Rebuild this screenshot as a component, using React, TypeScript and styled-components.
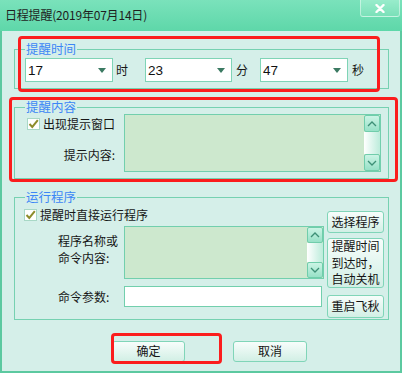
import React from "react";
import styled, { createGlobalStyle } from "styled-components";

const GlobalStyle = createGlobalStyle`
  html, body { margin: 0; padding: 0; background: #ffffff; }
  body {
    font-family: "Noto Sans CJK SC", "Noto Sans", sans-serif;
    font-size: 12px;
    color: #161616;
  }
  * { box-sizing: border-box; }
`;

const Window = styled.div`
  position: relative;
  width: 402px;
  height: 373px;
  display: flex;
  flex-direction: column;
  background: #d5efe9;
  overflow: hidden;
`;

const TitleBar = styled.div`
  height: 31px;
  flex: none;
  display: flex;
  justify-content: space-between;
  align-items: flex-start;
  background: linear-gradient(#7ae2bb, #5ed7a9);
`;

const Title = styled.div`
  padding: 6px 0 0 5px;
  line-height: 17px;
  font-size: 12px;
  letter-spacing: -0.2px;
  color: #1e1e1e;
`;

const CloseButton = styled.div`
  width: 40px;
  height: 17px;
  margin-right: 2px;
  display: flex;
  align-items: center;
  justify-content: center;
  background: linear-gradient(#98eccb, #7be0b9);
  border: 1px solid rgba(255, 255, 255, 0.45);
  border-top: none;
  border-radius: 0 0 3px 3px;
`;

const Body = styled.div`
  flex: 1;
  border: 2px solid #5cc9a0;
  border-top: none;
  padding: 11px 11px 0 12px;
  display: flex;
  flex-direction: column;
`;

const Group = styled.fieldset<{ $pad: string; $mt: number }>`
  margin: ${(p) => p.$mt}px 0 0 0;
  padding: ${(p) => p.$pad};
  border: 1px solid #76d1b1;
  min-width: 0;
`;

const Legend = styled.legend`
  padding: 0 1px;
  color: #3c86f6;
  font-size: 12.5px;
  line-height: 14px;
`;

const TimeRow = styled.div`
  display: flex;
  align-items: center;
`;

const Combo = styled.div<{ $w: number }>`
  width: ${(p) => p.$w}px;
  height: 24px;
  border: 1px solid #7fd4b6;
  background: #ffffff;
  display: flex;
  align-items: center;
  justify-content: space-between;
  padding: 0 6px 0 2px;
  font-family: "Liberation Sans", Arial, sans-serif;
  font-size: 13.5px;
  color: #111;
`;

const Unit = styled.span<{ $after: number }>`
  margin: 0 ${(p) => p.$after}px 0 ${(p) => (p.$after > 14 ? 3 : 4)}px;
  line-height: 16px;
`;

const ContentGrid = styled.div`
  display: grid;
  grid-template-columns: 99px 257px;
`;

const LeftColumn = styled.div`
  display: flex;
  flex-direction: column;
`;

const CheckRow = styled.label<{ $ml: number; $mt: number }>`
  display: flex;
  align-items: center;
  gap: 3px;
  height: 13px;
  margin: ${(p) => p.$mt}px 0 0 ${(p) => p.$ml}px;
  line-height: 17px;
  white-space: nowrap;
`;

const CheckBox = styled.span`
  width: 13px;
  height: 12px;
  flex: none;
  border: 1px solid #a8d8c6;
  background: #ffffff;
  display: inline-flex;
  align-items: center;
  justify-content: center;
`;

const RightLabel = styled.div`
  margin: auto 0 9px 0;
  padding-right: 9px;
  text-align: right;
  line-height: 17px;
`;

const TextArea = styled.div<{ $w: number; $h: number }>`
  width: ${(p) => p.$w}px;
  height: ${(p) => p.$h}px;
  border: 1px solid #72cfad;
  background: #cde8ce;
  display: flex;
  justify-content: flex-end;
`;

const ScrollBar = styled.div`
  width: 16px;
  display: flex;
  flex-direction: column;
`;

const ScrollButton = styled.div<{ $h: number }>`
  height: ${(p) => p.$h}px;
  flex: none;
  border: 1px solid #70cdab;
  border-radius: 2px;
  background: linear-gradient(#cbf4e5, #97e1c7);
  display: flex;
  align-items: center;
  justify-content: center;
`;

const ScrollTrack = styled.div`
  flex: 1;
  background: linear-gradient(to right, #ffffff, #bcecdb);
`;

const RunContent = styled.div`
  display: flex;
  gap: 3px;
`;

const RunMain = styled.div`
  width: 299px;
  display: flex;
  flex-direction: column;
`;

const FormRow = styled.div<{ $mt: number; $align: string }>`
  display: grid;
  grid-template-columns: 99px auto;
  align-items: ${(p) => p.$align};
  margin-top: ${(p) => p.$mt}px;
`;

const FieldLabel = styled.div<{ $mt: number }>`
  padding-left: 33px;
  margin-top: ${(p) => p.$mt}px;
  line-height: 17px;
`;

const TextInput = styled.div`
  width: 198px;
  height: 21px;
  border: 1px solid #72cfad;
  background: #ffffff;
`;

const SideButtons = styled.div`
  width: 57px;
  margin-top: 7px;
  display: flex;
  flex-direction: column;
`;

const Button = styled.div<{ $h: number; $mt?: number; $w?: number }>`
  width: ${(p) => (p.$w ? `${p.$w}px` : "100%")};
  height: ${(p) => p.$h}px;
  margin-top: ${(p) => p.$mt ?? 0}px;
  border: 1px solid #80d5b8;
  border-radius: 3px;
  background: linear-gradient(#f7fdfb, #d2efe5);
  display: flex;
  align-items: center;
  justify-content: center;
  text-align: center;
  line-height: 16.5px;
  color: #141414;
  white-space: nowrap;
`;

const BottomRow = styled.div`
  display: flex;
  gap: 48px;
  margin-top: 21px;
  padding-left: 98px;
`;

const Highlight = styled.div<{ $x: number; $y: number; $w: number; $h: number }>`
  position: absolute;
  left: ${(p) => p.$x}px;
  top: ${(p) => p.$y}px;
  width: ${(p) => p.$w}px;
  height: ${(p) => p.$h}px;
  border: 3px solid #fb1d1d;
  border-radius: 4px;
  pointer-events: none;
`;

const Check = () => (
  <CheckBox>
    <svg width="11" height="10" viewBox="0 0 11 10">
      <polyline points="1.5,5 4.3,8 9.8,1.2" fill="none" stroke="#8d8c2c" strokeWidth="2" />
    </svg>
  </CheckBox>
);

const Arrow = () => (
  <svg width="8" height="5" viewBox="0 0 8 5">
    <polygon points="0,0 8,0 4,5" fill="#3b7a62" />
  </svg>
);

const Chevron = ({ up }: { up?: boolean }) => (
  <svg width="10" height="6" viewBox="0 0 10 6">
    <polyline
      points={up ? "1,5 5,1 9,5" : "1,1 5,5 9,1"}
      fill="none"
      stroke="#3d8f76"
      strokeWidth="1.3"
    />
  </svg>
);

const Scroll = ({ btn }: { btn: number }) => (
  <ScrollBar>
    <ScrollButton $h={btn}>
      <Chevron up />
    </ScrollButton>
    <ScrollTrack />
    <ScrollButton $h={btn}>
      <Chevron />
    </ScrollButton>
  </ScrollBar>
);

const times = [
  { value: "17", unit: "时", w: 88, after: 17 },
  { value: "23", unit: "分", w: 87, after: 12 },
  { value: "47", unit: "秒", w: 88, after: 0 },
];

export default function App() {
  return (
    <>
      <GlobalStyle />
      <Window>
        <TitleBar>
          <Title>日程提醒(2019年07月14日)</Title>
          <CloseButton>
            <svg width="10" height="9" viewBox="0 0 10 9">
              <path d="M1.5 1 L8.5 8 M8.5 1 L1.5 8" stroke="#ffffff" strokeWidth="2.4" strokeLinecap="round" />
            </svg>
          </CloseButton>
        </TitleBar>
        <Body>
          <Group $pad="2px 6px 6px 10px" $mt={0}>
            <Legend>提醒时间</Legend>
            <TimeRow>
              {times.map((t) => (
                <React.Fragment key={t.unit}>
                  <Combo $w={t.w}>
                    <span>{t.value}</span>
                    <Arrow />
                  </Combo>
                  <Unit $after={t.after}>{t.unit}</Unit>
                </React.Fragment>
              ))}
            </TimeRow>
          </Group>

          <Group $pad="0 7px 6px 10px" $mt={11}>
            <Legend>提醒内容</Legend>
            <ContentGrid>
              <LeftColumn>
                <CheckRow $ml={2} $mt={3}>
                  <Check />
                  <span>出现提示窗口</span>
                </CheckRow>
                <RightLabel>提示内容:</RightLabel>
              </LeftColumn>
              <TextArea $w={257} $h={58}>
                <Scroll btn={17} />
              </TextArea>
            </ContentGrid>
          </Group>

          <Group $pad="0 4px 1px 10px" $mt={11}>
            <Legend>运行程序</Legend>
            <RunContent>
              <RunMain>
                <CheckRow $ml={-1} $mt={4}>
                  <Check />
                  <span>提醒时直接运行程序</span>
                </CheckRow>
                <FormRow $mt={5} $align="start">
                  <FieldLabel $mt={6}>
                    程序名称或
                    <br />
                    命令内容:
                  </FieldLabel>
                  <TextArea $w={200} $h={53}>
                    <Scroll btn={16} />
                  </TextArea>
                </FormRow>
                <FormRow $mt={7} $align="center">
                  <FieldLabel $mt={0}>命令参数:</FieldLabel>
                  <TextInput />
                </FormRow>
              </RunMain>
              <SideButtons>
                <Button $h={22}>选择程序</Button>
                <Button $h={50} $mt={5}>
                  提醒时间
                  <br />
                  到达时，
                  <br />
                  自动关机
                </Button>
                <Button $h={23} $mt={7}>重启飞秋</Button>
              </SideButtons>
            </RunContent>
          </Group>

          <BottomRow>
            <Button $h={21} $w={73}>确定</Button>
            <Button $h={21} $w={74}>取消</Button>
          </BottomRow>
        </Body>

        <Highlight $x={18} $y={36} $w={362} $h={56} />
        <Highlight $x={9} $y={97} $w={389} $h={85} />
        <Highlight $x={111} $y={333} $w={111} $h={31} />
      </Window>
    </>
  );
}
